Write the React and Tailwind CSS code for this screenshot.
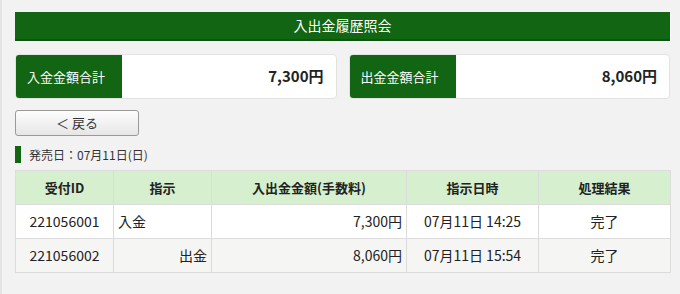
import React from "react";

const rows = [
    { id: "221056001", kind: "入金", amount: "7,300円", date: "07月11日 14:25", status: "完了" },
    { id: "221056002", kind: "出金", amount: "8,060円", date: "07月11日 15:54", status: "完了" },
];

function TotalCard({ label, value }) {
    return (
        <div className="flex flex-1 h-[45px] rounded-[4px] border border-[#e2e2e2] bg-white overflow-hidden">
            <div className="w-[106px] bg-[#126512] text-white text-[13px] flex items-center pl-[11px]">{label}</div>
            <div className="flex-1 flex items-center justify-end pr-[12px] text-[15px] font-bold text-[#222]">{value}</div>
        </div>
    );
}

export default function App() {
    return (
        <div
            className="w-[680px] h-[294px] bg-[#f2f2f2] border-l-2 border-[#e4e4e4] pl-[13px] pr-[10px] pt-[12px] text-[#222]"
            style={{ fontFamily: '"Noto Sans CJK JP", "Noto Sans", sans-serif' }}
        >
            <div className="h-[29px] bg-[#126512] text-white text-[14px] flex items-center justify-center border-b-2 border-[#0d560d] shadow-[1px_1px_0_#ffffff]">
                入出金履歴照会
            </div>

            <div className="flex gap-[12px] mt-[13px]">
                <TotalCard label="入金金額合計" value="7,300円" />
                <TotalCard label="出金金額合計" value="8,060円" />
            </div>

            <button
                type="button"
                className="mt-[11px] w-[124px] h-[26px] rounded-[3px] border border-[#9a9a9a] bg-gradient-to-b from-[#fdfdfd] to-[#e6e6e6] text-[13px] text-[#333] flex items-center justify-center"
            >
                ＜ 戻る
            </button>

            <div className="flex items-center mt-[10px] h-[17px]">
                <div className="w-[6px] h-[17px] bg-[#126512]"></div>
                <span className="ml-[8px] text-[12px] text-[#333]">発売日：07月11日(日)</span>
            </div>

            <table className="mt-[7px] w-[655px] border-collapse text-[14px] table-fixed">
                <colgroup>
                    <col className="w-[98px]" />
                    <col className="w-[98px]" />
                    <col className="w-[195px]" />
                    <col className="w-[132px]" />
                    <col className="w-[132px]" />
                </colgroup>
                <thead>
                    <tr className="h-[34px] bg-[#d5efcf] text-[13px]">
                        <th className="border border-[#dcdcdc] font-bold">受付ID</th>
                        <th className="border border-[#dcdcdc] font-bold">指示</th>
                        <th className="border border-[#dcdcdc] font-bold">入出金金額(手数料)</th>
                        <th className="border border-[#dcdcdc] font-bold">指示日時</th>
                        <th className="border border-[#dcdcdc] font-bold">処理結果</th>
                    </tr>
                </thead>
                <tbody>
                    {rows.map((r, i) => (
                        <tr key={r.id} className={i % 2 === 0 ? "h-[34px] bg-white" : "h-[34px] bg-[#f5f5f3]"}>
                            <td className="border border-[#dcdcdc] text-center">{r.id}</td>
                            <td className={r.kind === "入金" ? "border border-[#dcdcdc] text-left pl-[4px]" : "border border-[#dcdcdc] text-right pr-[4px]"}>{r.kind}</td>
                            <td className="border border-[#dcdcdc] text-right pr-[4px]">{r.amount}</td>
                            <td className="border border-[#dcdcdc] text-center">{r.date}</td>
                            <td className="border border-[#dcdcdc] text-center">{r.status}</td>
                        </tr>
                    ))}
                </tbody>
            </table>
        </div>
    );
}
